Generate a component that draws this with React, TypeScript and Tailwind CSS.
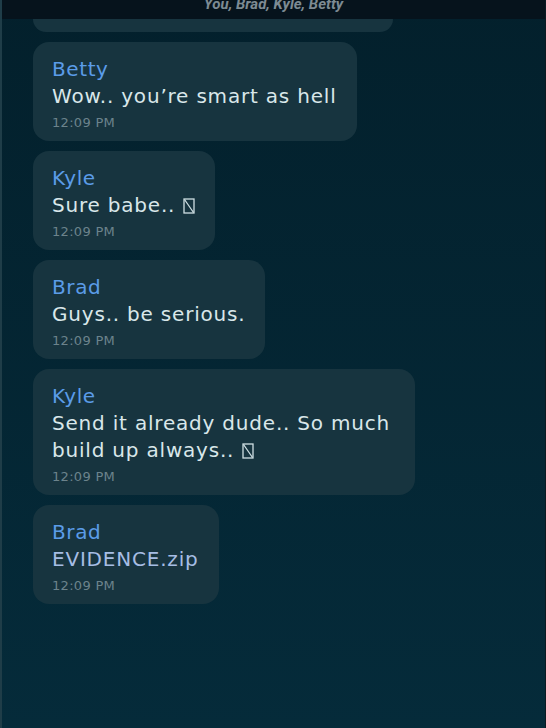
import React from "react";

function Tofu() {
  return (
    <svg width="12" height="16" viewBox="0 0 12 16" className="inline-block align-[-2px] ml-[1px]">
      <rect x="1" y="1" width="10" height="14" fill="none" stroke="#cfdfe3" strokeWidth="1.3" />
      <line x1="1.5" y1="1.5" x2="10.5" y2="14.5" stroke="#cfdfe3" strokeWidth="1.3" />
    </svg>
  );
}

type Msg = { name: string; text: React.ReactNode; file?: boolean };

const msgs: Msg[] = [
  { name: "Betty", text: "Wow.. you\u2019re smart as hell" },
  { name: "Kyle", text: <>Sure babe.. <Tofu /></> },
  { name: "Brad", text: "Guys.. be serious." },
  { name: "Kyle", text: <>Send it already dude.. So much build up always.. <Tofu /></> },
  { name: "Brad", text: "EVIDENCE.zip", file: true },
];

function Bubble({ m }: { m: Msg }) {
  return (
    <div className="w-fit max-w-[382px] rounded-[16px] bg-[#17343f] pl-[19px] pr-[20px] pt-[14px] pb-[8px]">
      <div className="text-[20px] leading-[27px] tracking-[0.6px] text-[#5b9ce8]">{m.name}</div>
      <div
        className={
          "text-[20px] leading-[27px] tracking-[0.8px] " +
          (m.file ? "text-[#a6bde4]" : "text-[#d9e7ea]")
        }
      >
        {m.text}
      </div>
      <div className="mt-[3px] text-[13px] leading-[20px] tracking-[0.3px] text-[#6c838c]">12:09 PM</div>
    </div>
  );
}

export default function App() {
  return (
    <div
      className="relative w-[546px] h-[728px] overflow-hidden border-l-2 border-r border-l-[#1f3d48] border-r-[#0b1a22] bg-gradient-to-b from-[#03202c] to-[#052b3a]"
      style={{ fontFamily: "'DejaVu Sans', sans-serif" }}
    >
      <div className="h-[19px] bg-[#06131c] flex justify-center items-end overflow-hidden">
        <div
          className="italic font-bold text-[15px] leading-[15px] text-[#7d8b93] mb-[7px]"
          style={{ fontFamily: "Roboto, sans-serif" }}
        >
          You, Brad, Kyle, Betty
        </div>
      </div>
      <div className="ml-[31px] w-[360px] h-[13px] rounded-b-[16px] bg-[#17343f]" />
      <div className="mt-[10px] ml-[31px] flex flex-col gap-[10px]">
        {msgs.map((m, i) => (
          <Bubble key={i} m={m} />
        ))}
      </div>
    </div>
  );
}
